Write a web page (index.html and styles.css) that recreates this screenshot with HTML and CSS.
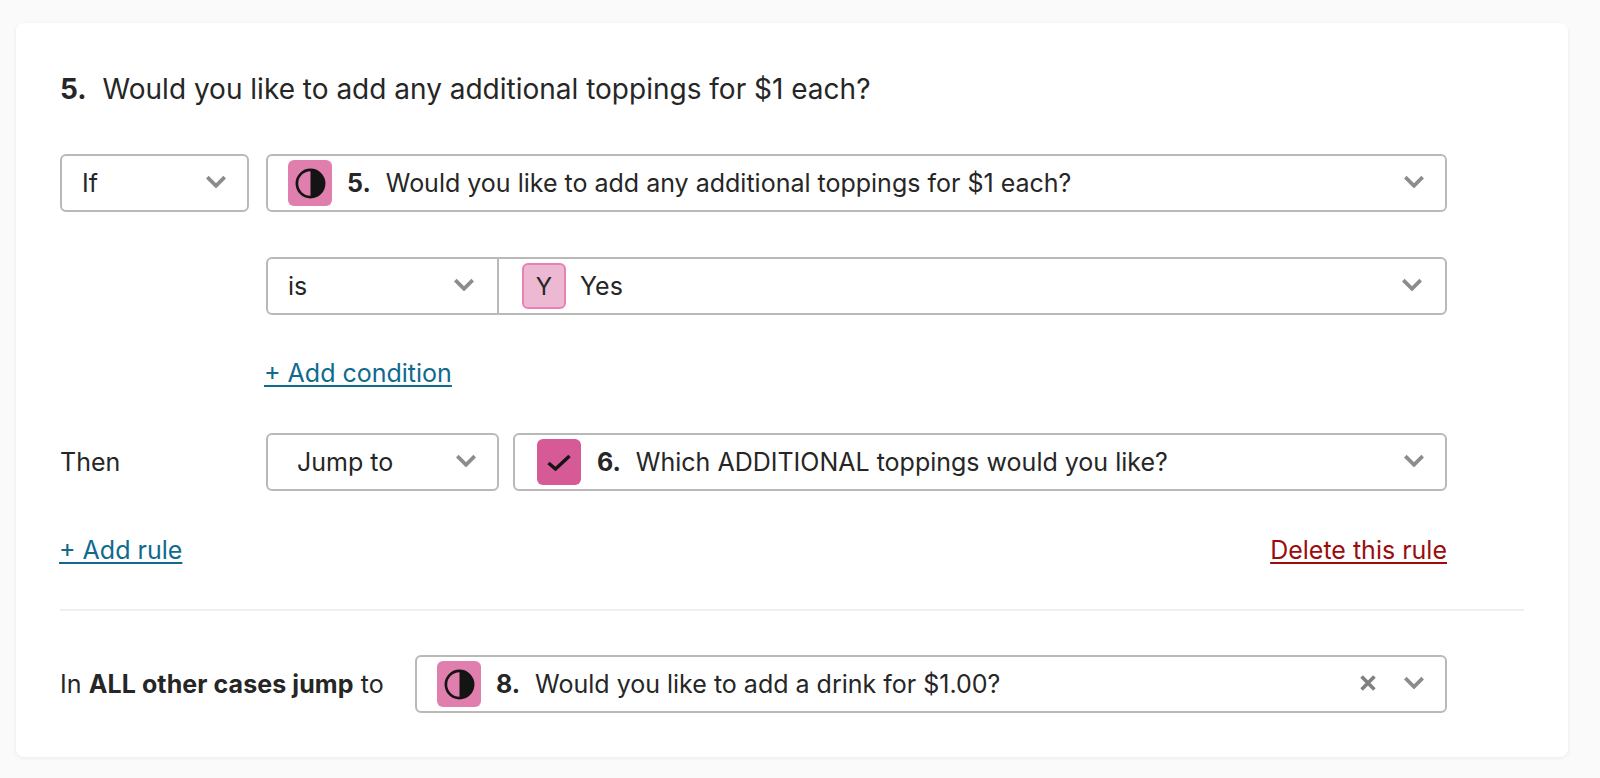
FILE: index.html
```html
<!DOCTYPE html>
<html lang="en">
<head>
<meta charset="utf-8">
<title>Logic rule</title>
<link rel="stylesheet" href="styles.css">
</head>
<body>
<main class="card">
  <h1 class="question"><b class="num">5.</b>Would you like to add any additional toppings for $1 each?</h1>

  <div class="rule-row row-if">
    <div class="select select-if"><span class="value">If</span><svg class="chev" viewBox="0 0 20 12"><path d="M2 2l8 8 8-8"/></svg></div>
    <div class="select grow">
      <span class="badge badge-pink"><svg class="half" viewBox="0 0 32 32"><circle cx="16" cy="16" r="13.2"/><path d="M16 2.8a13.2 13.2 0 0 1 0 26.4z"/></svg></span>
      <b class="num small">5.</b><span class="value">Would you like to add any additional toppings for $1 each?</span>
      <svg class="chev end" viewBox="0 0 20 12"><path d="M2 2l8 8 8-8"/></svg>
    </div>
  </div>

  <div class="rule-row row-is">
    <div class="spacer"></div>
    <div class="select grow split">
      <div class="part-is"><span class="value">is</span><svg class="chev" viewBox="0 0 20 12"><path d="M2 2l8 8 8-8"/></svg></div>
      <div class="part-yes">
        <span class="badge badge-y">Y</span><span class="value">Yes</span>
        <svg class="chev end" viewBox="0 0 20 12"><path d="M2 2l8 8 8-8"/></svg>
      </div>
    </div>
  </div>

  <div class="rule-row row-add">
    <div class="spacer"></div>
    <a class="link" href="#">+ Add condition</a>
  </div>

  <div class="rule-row row-then">
    <div class="label-col">Then</div>
    <div class="select select-jump"><span class="value">Jump to</span><svg class="chev" viewBox="0 0 20 12"><path d="M2 2l8 8 8-8"/></svg></div>
    <div class="select grow pick-check">
      <span class="badge badge-check"><svg class="check" viewBox="0 0 24 17"><path d="M1.5 9l7 6L22.5 2"/></svg></span>
      <b class="num small">6.</b><span class="value">Which ADDITIONAL toppings would you like?</span>
      <svg class="chev end" viewBox="0 0 20 12"><path d="M2 2l8 8 8-8"/></svg>
    </div>
  </div>

  <div class="links">
    <a class="link" href="#">+ Add rule</a>
    <a class="link danger" href="#">Delete this rule</a>
  </div>

  <hr class="rule">

  <div class="rule-row row-other">
    <div class="other-label">In <b>ALL other cases jump</b> to</div>
    <div class="select grow">
      <span class="badge badge-pink"><svg class="half" viewBox="0 0 32 32"><circle cx="16" cy="16" r="13.2"/><path d="M16 2.8a13.2 13.2 0 0 1 0 26.4z"/></svg></span>
      <b class="num small">8.</b><span class="value">Would you like to add a drink for $1.00?</span>
      <svg class="cross end" viewBox="0 0 14 14"><path d="M2 2l10 10M12 2L2 12"/></svg>
      <svg class="chev after-cross" viewBox="0 0 20 12"><path d="M2 2l8 8 8-8"/></svg>
    </div>
  </div>
</main>
</body>
</html>
```
FILE: styles.css
```css
* { box-sizing: border-box; }
html, body { margin: 0; height: 100%; }
body {
  background: #fafafa;
  color: #262626;
  font-family: Inter, "Liberation Sans", sans-serif;
  font-size: 25px;
  padding: 23px 32px 21px 16px;
  overflow: hidden;
}
.card {
  background: #fff;
  border-radius: 8px;
  height: 734px;
  padding: 46px 44px 0 44px;
  box-shadow: 0 1px 4px rgba(0, 0, 0, .07);
}
.question {
  margin: 0 0 45px;
  font-size: 28px;
  font-weight: 400;
  line-height: 40px;
}
.num { font-weight: 700; margin-right: 16px; }
.small { margin-right: 15px; }
.rule-row { display: flex; align-items: center; margin-right: 77px; }
.row-is { margin-top: 45px; }
.row-add { margin-top: 40px; height: 36px; }
.row-add .link { margin-left: -2px; }
.row-then { margin-top: 42px; }
.row-other { margin-top: 44px; }
.spacer, .label-col { width: 206px; flex: none; }
.select {
  height: 58px;
  display: flex;
  align-items: center;
  background: #fff;
  border: 2px solid #b9b9b9;
  border-radius: 6px;
  padding-left: 20px;
}
.grow { flex: 1; min-width: 0; }
.select-if { width: 189px; flex: none; margin-right: 17px; }
.select-jump { width: 233px; flex: none; margin-right: 14px; padding-left: 29px; }
.pick-check { padding-left: 22px; }
.pick-check .badge { margin-right: 16px; }
.split { padding: 0; }
.part-is {
  width: 231px;
  height: 100%;
  display: flex;
  align-items: center;
  padding-left: 20px;
  border-right: 2px solid #b9b9b9;
  flex: none;
}
.part-is .chev { margin-left: auto; margin-right: 22px; }
.select-if .chev, .select-jump .chev { margin-left: auto; margin-right: 20px; }
.part-yes { flex: 1; height: 100%; display: flex; align-items: center; padding-left: 23px; }
.part-yes .badge { margin-right: 14px; }
.chev { width: 22px; height: 13px; flex: none; margin-top: -4px; }
.chev path { fill: none; stroke: #8c8c8c; stroke-width: 3.4; }
.end { margin-left: auto; }
.chev.end { margin-right: 20px; }
.part-yes .chev.end { margin-right: 22px; }
.cross { width: 18px; height: 18px; flex: none; margin-right: 26px; margin-top: -2px; }
.cross path { fill: none; stroke: #808080; stroke-width: 2.8; }
.after-cross { margin-right: 20px; }
.badge {
  width: 44px;
  height: 46px;
  flex: none;
  border-radius: 6px;
  margin-right: 15px;
  display: flex;
  align-items: center;
  justify-content: center;
}
.badge-pink { background: #e07fae; }
.badge-y { background: #ecb8d2; border: 2px solid #e683b3; font-size: 24px; }
.badge-check { background: #d55a96; }
.half { width: 33px; height: 33px; }
.half circle { fill: none; stroke: #141414; stroke-width: 2.6; }
.half path { fill: #141414; }
.check { width: 24px; height: 17px; }
.check path { fill: none; stroke: #141414; stroke-width: 3.4; }
.link {
  color: #0f6a8e;
  text-decoration: underline;
  text-underline-offset: 3px;
  font-size: 25px;
  margin-left: -1px;
}
.danger { color: #9b0d0d; }
.links {
  display: flex;
  justify-content: space-between;
  margin: 41px 77px 0 0;
  height: 36px;
  align-items: center;
}
.rule {
  border: 0;
  border-top: 2px solid #efefef;
  margin: 41px 0 0;
}
.other-label { width: 355px; flex: none; letter-spacing: .08px; }
```
